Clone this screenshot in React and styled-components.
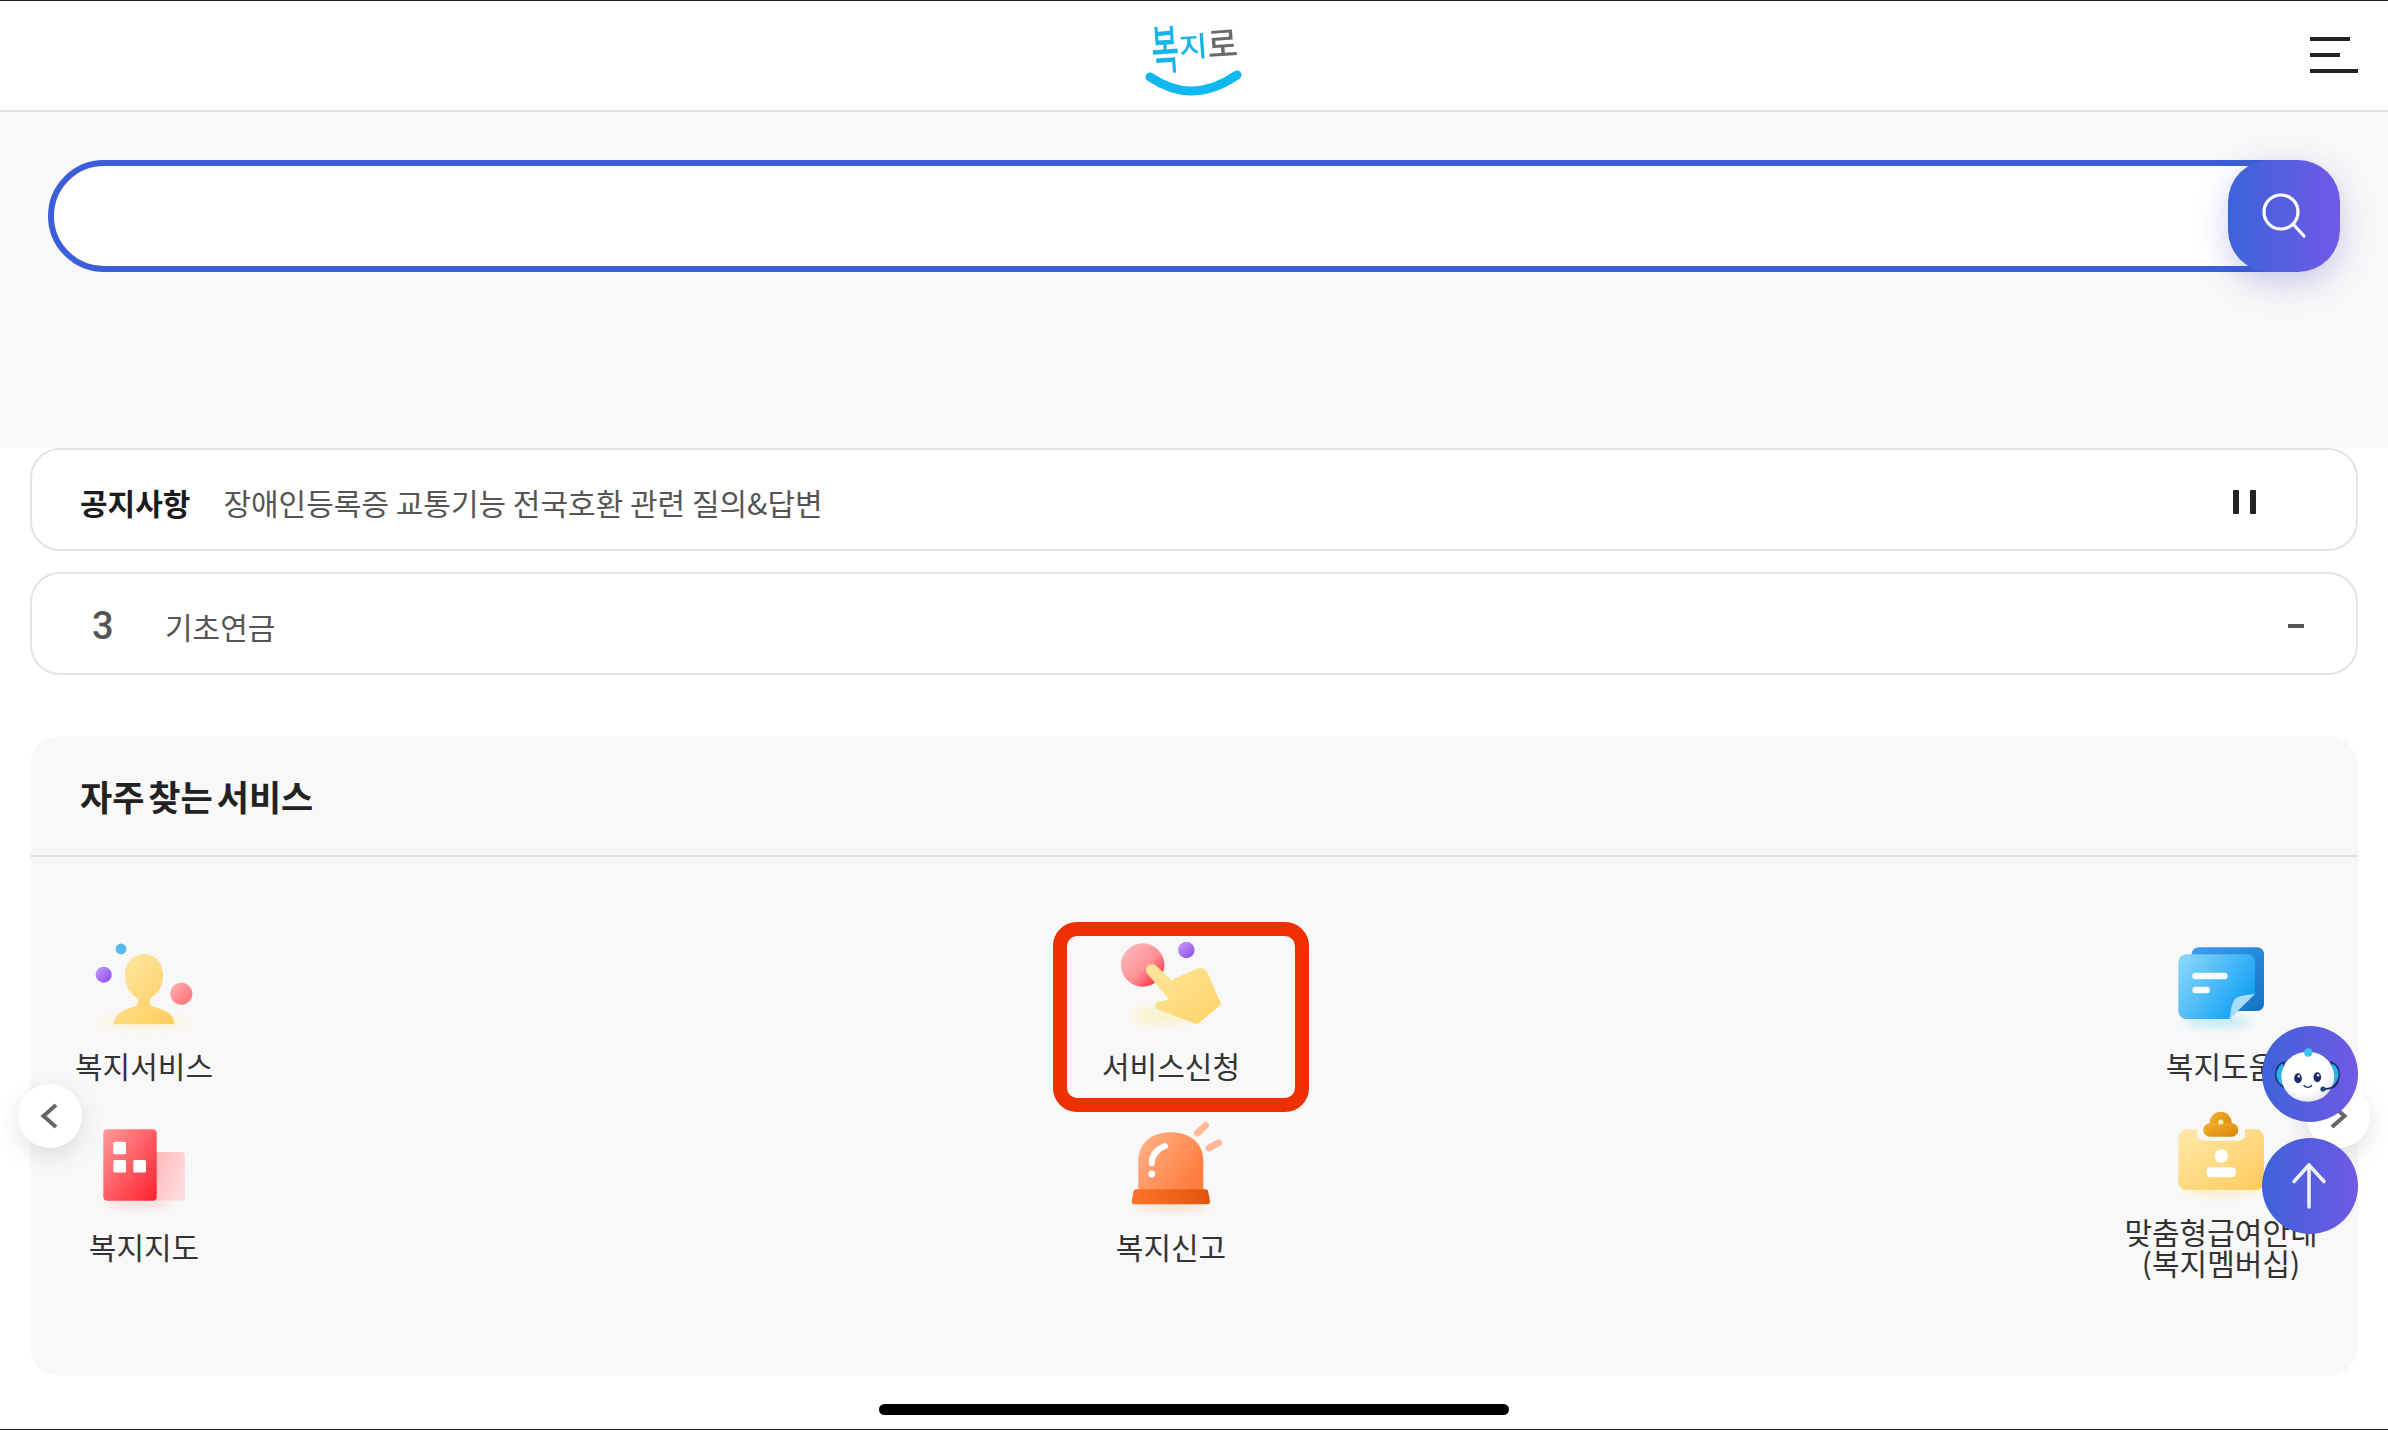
import React from "react";
import styled, { createGlobalStyle } from "styled-components";

const GlobalStyle = createGlobalStyle`
  html, body {
    margin: 0;
    padding: 0;
    background: #fff;
  }
  * {
    box-sizing: border-box;
  }
`;

const Page = styled.div`
  position: relative;
  display: flex;
  flex-direction: column;
  width: 2388px;
  height: 1430px;
  overflow: hidden;
  background: #fff;
  font-family: "Noto Sans CJK KR", "Noto Sans", sans-serif;
`;

const Header = styled.header`
  display: grid;
  grid-template-columns: 1fr auto 1fr;
  align-items: center;
  height: 112px;
  padding: 0 30px;
  border-top: 1px solid #1c1c1c;
  border-bottom: 2px solid #e0e0e0;
`;

const Logo = styled.div`
  grid-column: 2;
  display: flex;
  flex-direction: column;
  align-items: center;
  width: 98px;
  margin-top: -4px;
`;

const LogoText = styled.div`
  display: flex;
  align-items: center;
  height: 60px;
  padding-top: 4px;
  transform: rotate(-4deg);
`;

const LogoLetter = styled.span`
  display: inline-block;
  font-size: ${({ $size }) => $size}px;
  line-height: 1;
  font-weight: 500;
  color: ${({ $color }) => $color};
  transform: scaleY(${({ $stretch }) => $stretch});
`;

const LogoSmile = styled.svg`
  width: 98px;
  height: 26px;
  margin-top: -2px;
`;

const MenuButton = styled.div`
  grid-column: 3;
  justify-self: end;
  display: flex;
  flex-direction: column;
  gap: 12px;
  width: 48px;
  margin-top: -2px;
`;

const MenuLine = styled.span`
  display: block;
  width: ${({ $width }) => $width}px;
  height: 4px;
  background: #222;
`;

const SearchBand = styled.section`
  height: 336px;
  padding: 48px 48px 0 48px;
  background: #f8f8f8;
`;

const SearchBox = styled.div`
  position: relative;
  height: 112px;
  border: 6px solid #3a5fd8;
  border-radius: 56px;
  background: #fff;
`;

const SearchButton = styled.button`
  position: absolute;
  top: -6px;
  right: -6px;
  display: flex;
  align-items: center;
  justify-content: center;
  width: 112px;
  height: 112px;
  padding: 0;
  border: 0;
  border-radius: 42px;
  background: linear-gradient(90deg, #3b63d8, #7159e8);
  box-shadow: 0 10px 32px rgba(72, 72, 200, 0.28);
`;

const RowList = styled.div`
  display: flex;
  flex-direction: column;
  gap: 21px;
  padding: 0 30px;
`;

const Row = styled.div`
  display: flex;
  align-items: center;
  height: 103px;
  padding: 4px ${({ $right }) => $right}px 0 ${({ $left }) => $left}px;
  border: 2px solid #e3e3e3;
  border-radius: 30px;
  background: #fff;
`;

const NoticeLabel = styled.strong`
  margin-right: 33px;
  font-size: 30px;
  line-height: 40px;
  font-weight: 700;
  color: #1c1c1c;
`;

const RowText = styled.span`
  font-size: 30px;
  line-height: 40px;
  font-weight: 400;
  color: #555;
`;

const Rank = styled.span`
  width: 73px;
  font-family: Roboto, sans-serif;
  font-size: 38px;
  line-height: 40px;
  font-weight: 500;
  color: #555;
`;

const PauseIcon = styled.div`
  display: flex;
  gap: 11px;
  margin-left: auto;
`;

const PauseBar = styled.span`
  display: block;
  width: 6px;
  height: 24px;
  border-radius: 1px;
  background: #222;
`;

const MinusIcon = styled.span`
  display: block;
  width: 16px;
  height: 4px;
  margin-left: auto;
  background: #555;
`;

const ServiceCard = styled.section`
  position: relative;
  height: 640px;
  margin: 61px 30px 0;
  border-radius: 30px;
  background: #f8f8f8;
`;

const CardHeader = styled.div`
  display: flex;
  align-items: center;
  height: 121px;
  padding: 0 0 0 50px;
  border-bottom: 2px solid #e0e0e0;
`;

const CardTitle = styled.h2`
  margin: 0;
  font-size: 35px;
  line-height: 44px;
  font-weight: 700;
  word-spacing: -4px;
  color: #222;
`;

const ServiceGrid = styled.div`
  display: grid;
  grid-template-columns: 1027px 1050px 228px;
  grid-template-rows: 181px 181px;
  align-items: center;
  justify-items: start;
  margin-top: 61px;
  height: 362px;
  overflow: hidden;
`;

const ServiceItem = styled.div`
  position: relative;
  display: flex;
  flex-direction: column;
  align-items: center;
  width: 228px;
  margin-top: ${({ $tall }) => ($tall ? 4 : 0)}px;
`;

const ServiceIcon = styled.svg`
  display: block;
  width: 110px;
  height: 100px;
`;

const ServiceLabel = styled.span`
  margin-top: ${({ $tall }) => ($tall ? 10 : 14)}px;
  font-size: 30px;
  line-height: 31px;
  text-align: center;
  white-space: nowrap;
  color: #333;
`;

const Highlight = styled.div`
  position: absolute;
  top: -14px;
  left: -4px;
  right: -24px;
  bottom: -31px;
  border: 14px solid #ee2f00;
  border-radius: 24px;
`;

const ArrowButton = styled.div`
  position: absolute;
  top: 348px;
  ${({ $side }) => ($side === "left" ? "left: -12px;" : "right: -12px;")}
  display: flex;
  align-items: center;
  justify-content: center;
  width: 64px;
  height: 64px;
  border-radius: 50%;
  background: #fff;
  box-shadow: 0 8px 24px rgba(60, 60, 90, 0.14);
`;

const FloatButton = styled.div`
  position: absolute;
  right: 30px;
  top: ${({ $top }) => $top}px;
  width: 96px;
  height: 96px;
  border-radius: 50%;
  background: linear-gradient(90deg, #3d62d8, #7159e6);
`;

const FloatIcon = styled.svg`
  display: block;
  width: 96px;
  height: 96px;
`;

const HomeStrip = styled.div`
  flex: 1;
  display: flex;
  justify-content: center;
  padding-top: 28px;
  border-bottom: 1px solid #1c1c1c;
`;

const HomeBar = styled.span`
  display: block;
  width: 630px;
  height: 11px;
  border-radius: 6px;
  background: #000;
`;

const SearchGlyph = () => (
  <svg width="56" height="56" viewBox="0 0 56 56" fill="none" stroke="#fff" strokeWidth="3.2" strokeLinecap="round">
    <circle cx="25" cy="24" r="17" />
    <path d="M37 36 L48 48" />
  </svg>
);

const Chevron = ({ points }) => (
  <svg width="24" height="32" viewBox="0 0 24 32" fill="none" stroke="#666" strokeWidth="4" strokeLinejoin="miter">
    <polyline points={points} />
  </svg>
);

const Blur = ({ id, amount = 5 }) => (
  <filter id={id} x="-50%" y="-100%" width="200%" height="300%">
    <feGaussianBlur stdDeviation={amount} />
  </filter>
);

const PersonIcon = () => (
  <ServiceIcon viewBox="0 0 110 100">
    <defs>
      <linearGradient id="personFill" x1="0" y1="0" x2="1" y2="1">
        <stop offset="0" stopColor="#fde8a8" />
        <stop offset="1" stopColor="#ffcd58" />
      </linearGradient>
      <linearGradient id="personRed" x1="0" y1="0" x2="1" y2="1">
        <stop offset="0" stopColor="#ffb3b3" />
        <stop offset="1" stopColor="#ff6a6e" />
      </linearGradient>
      <linearGradient id="personPurple" x1="0" y1="0" x2="1" y2="1">
        <stop offset="0" stopColor="#c49bf5" />
        <stop offset="1" stopColor="#8a49ee" />
      </linearGradient>
      <Blur id="personGlow" amount={5} />
    </defs>
    <ellipse cx="55" cy="87" rx="42" ry="5" fill="#ffe89c" opacity="0.55" filter="url(#personGlow)" />
    <circle cx="32" cy="13" r="5.4" fill="#5cb9ec" />
    <circle cx="14.7" cy="38.7" r="8" fill="url(#personPurple)" />
    <circle cx="92.3" cy="57.7" r="11" fill="url(#personRed)" />
    <path
      d="M24.5 88 C25 79 33 74 44 71 C49 69.5 50.5 66 48 62 C41 58 36 50 36 39 C36 27 44 18 55 18 C66 18 74 27 74 39 C74 50 69 58 62 62 C59.5 66 61 69.5 66 71 C77 74 85 79 85.5 88 Z"
      fill="url(#personFill)"
    />
  </ServiceIcon>
);

const HandIcon = () => (
  <ServiceIcon viewBox="0 0 110 100">
    <defs>
      <linearGradient id="handRed" x1="0" y1="0" x2="1" y2="1">
        <stop offset="0" stopColor="#ffc0c0" />
        <stop offset="0.55" stopColor="#ff9196" />
        <stop offset="1" stopColor="#ff0f22" />
      </linearGradient>
      <linearGradient id="handFill" x1="0" y1="0" x2="1" y2="1">
        <stop offset="0" stopColor="#fde7a0" />
        <stop offset="1" stopColor="#ffd264" />
      </linearGradient>
      <linearGradient id="handPurple" x1="0" y1="0" x2="1" y2="1">
        <stop offset="0" stopColor="#c8a0f5" />
        <stop offset="1" stopColor="#8a4bee" />
      </linearGradient>
      <Blur id="handGlow" amount={6} />
    </defs>
    <ellipse cx="46" cy="80" rx="30" ry="7" fill="#ffec9e" opacity="0.6" filter="url(#handGlow)" />
    <circle cx="26.7" cy="29" r="21.7" fill="url(#handRed)" />
    <circle cx="70.3" cy="14" r="8.3" fill="url(#handPurple)" />
    <path
      d="M30.8 37 C28.5 33.5 31.5 27 37 28 C39 28.5 40 29.5 41.5 31 L56 44.5 C60 41.5 70 37.5 82 32.5 C86 31 90 33 91.5 36.5 L104.5 66.5 C105 68 104.6 69 103.5 70 L83 87 C81.8 88 80.6 88.2 79 87.6 L42 73.5 C38.5 72 38 67.5 41.5 66 L53 63.5 Z"
      fill="url(#handFill)"
    />
  </ServiceIcon>
);

const NoteIcon = () => (
  <ServiceIcon viewBox="0 0 110 100">
    <defs>
      <linearGradient id="noteBack" x1="0" y1="0" x2="1" y2="1">
        <stop offset="0" stopColor="#3d9df2" />
        <stop offset="1" stopColor="#1273c2" />
      </linearGradient>
      <linearGradient id="noteFront" x1="0" y1="0" x2="1" y2="0.6">
        <stop offset="0" stopColor="#90daf8" />
        <stop offset="1" stopColor="#12a0f6" />
      </linearGradient>
      <Blur id="noteGlow" amount={4} />
    </defs>
    <ellipse cx="52" cy="86" rx="34" ry="5" fill="#8adcf8" opacity="0.55" filter="url(#noteGlow)" />
    <rect x="25.7" y="11.3" width="72.3" height="63.7" rx="7" fill="url(#noteBack)" />
    <path
      d="M20.3 18.3 H81 C85.4 18.3 89 21.9 89 26.3 V58 L63.5 83 H20.3 C15.9 83 12.3 79.4 12.3 75 V26.3 C12.3 21.9 15.9 18.3 20.3 18.3 Z"
      fill="url(#noteFront)"
    />
    <path d="M89 58 C80 59 72 60 69 63 C65.5 67 65 75 63.5 83 Z" fill="#a8dcf6" />
    <rect x="26.3" y="36.7" width="35.4" height="6.6" rx="3.3" fill="#fff" opacity="0.95" />
    <rect x="26.3" y="50.7" width="17.7" height="6.6" rx="3.3" fill="#fff" opacity="0.95" />
  </ServiceIcon>
);

const BuildingIcon = () => (
  <ServiceIcon viewBox="0 0 110 100">
    <defs>
      <linearGradient id="buildingFront" x1="0" y1="0" x2="1" y2="1">
        <stop offset="0" stopColor="#ff9c9c" />
        <stop offset="1" stopColor="#ff1f2e" />
      </linearGradient>
      <linearGradient id="buildingBack" x1="0" y1="0" x2="1" y2="0.5">
        <stop offset="0" stopColor="#ffb4b6" />
        <stop offset="1" stopColor="#ffd8d9" />
      </linearGradient>
      <Blur id="buildingGlow" amount={4} />
    </defs>
    <ellipse cx="50" cy="86" rx="34" ry="4" fill="#ffb5b8" opacity="0.55" filter="url(#buildingGlow)" />
    <rect x="60" y="35" width="36" height="48.5" rx="4" fill="url(#buildingBack)" />
    <rect x="14.3" y="12.3" width="53.4" height="71.4" rx="4" fill="url(#buildingFront)" />
    <rect x="24.3" y="24.7" width="12.7" height="12.5" rx="1.5" fill="#fff" />
    <rect x="24.3" y="43" width="12.7" height="12.5" rx="1.5" fill="#fff" />
    <rect x="44.3" y="43" width="12.7" height="12.5" rx="1.5" fill="#fff" />
  </ServiceIcon>
);

const SirenIcon = () => (
  <ServiceIcon viewBox="0 0 110 100">
    <defs>
      <linearGradient id="sirenDome" x1="0" y1="0" x2="1" y2="0.6">
        <stop offset="0" stopColor="#ffb48c" />
        <stop offset="1" stopColor="#ff7d3e" />
      </linearGradient>
      <linearGradient id="sirenBase" x1="0" y1="0" x2="1" y2="0">
        <stop offset="0" stopColor="#ff7428" />
        <stop offset="1" stopColor="#e2540c" />
      </linearGradient>
      <Blur id="sirenGlow" amount={5} />
    </defs>
    <ellipse cx="55" cy="89" rx="36" ry="5" fill="#ffc2a4" opacity="0.5" filter="url(#sirenGlow)" />
    <path d="M22.3 74 V44 C22.3 26 36 15.3 54.8 15.3 C73.6 15.3 87.3 26 87.3 44 V74 Z" fill="url(#sirenDome)" />
    <path
      d="M20.5 72.3 H89.5 C91 72.3 91.8 73 92.2 74.2 L94 84 C94.3 86 93.2 87.3 91.5 87.3 H18 C16.3 87.3 15.3 86 15.7 84 L17.5 74.2 C17.9 73 19 72.3 20.5 72.3 Z"
      fill="url(#sirenBase)"
    />
    <path d="M49 29 C41 32 36 38 35.7 46.3" fill="none" stroke="#fff" strokeWidth="6" strokeLinecap="round" />
    <circle cx="35.7" cy="57" r="3.4" fill="#fff" />
    <path d="M81.5 16 L89.5 8.5 M93 31 L102.5 25.8" stroke="#ffb998" strokeWidth="7" strokeLinecap="round" />
  </ServiceIcon>
);

const ClipboardIcon = () => (
  <ServiceIcon viewBox="0 0 110 100">
    <defs>
      <linearGradient id="clipBoard" x1="0" y1="0" x2="1" y2="1">
        <stop offset="0" stopColor="#ffe9ac" />
        <stop offset="1" stopColor="#ffca5a" />
      </linearGradient>
      <linearGradient id="clipTop" x1="0" y1="0" x2="1" y2="1">
        <stop offset="0" stopColor="#f4b02f" />
        <stop offset="1" stopColor="#d78608" />
      </linearGradient>
      <Blur id="clipGlow" amount={4} />
    </defs>
    <ellipse cx="55" cy="86" rx="38" ry="4" fill="#ffe49a" opacity="0.6" filter="url(#clipGlow)" />
    <rect x="12.3" y="23.3" width="85.7" height="60.7" rx="8" fill="url(#clipBoard)" />
    <path d="M31.3 20 H79 V28 C79 32 76.5 34.7 72.5 34.7 H37.8 C33.8 34.7 31.3 32 31.3 28 Z" fill="#f8f8f8" />
    <circle cx="54.7" cy="16.7" r="11" fill="url(#clipTop)" />
    <rect x="37.3" y="17" width="35" height="13.7" rx="6.8" fill="url(#clipTop)" />
    <circle cx="54.7" cy="16" r="2.6" fill="#ffe9b8" />
    <circle cx="55.3" cy="50" r="6.8" fill="#fff" />
    <rect x="40.7" y="61.3" width="29" height="10" rx="4" fill="#fff" />
  </ServiceIcon>
);

const ChatbotGlyph = () => (
  <FloatIcon viewBox="0 0 96 96">
    <defs>
      <radialGradient id="botFace" cx="0.45" cy="0.4" r="0.7">
        <stop offset="0.6" stopColor="#ffffff" />
        <stop offset="1" stopColor="#d8dbe6" />
      </radialGradient>
    </defs>
    <path d="M22 36 C11 41 11 56 22 61 Z" fill="#29b2e6" stroke="#1d2a70" strokeWidth="1.4" />
    <path d="M69 36 C80 41 80 56 69 61 Z" fill="#29b2e6" stroke="#1d2a70" strokeWidth="1.4" />
    <ellipse cx="45.8" cy="50.7" rx="26.5" ry="25" fill="url(#botFace)" />
    <circle cx="46.3" cy="26.5" r="4.2" fill="#38c8f6" />
    <ellipse cx="36" cy="52.3" rx="3.8" ry="5" fill="#1e2a6a" />
    <ellipse cx="55.3" cy="51.3" rx="3.8" ry="5" fill="#1e2a6a" />
    <circle cx="36.8" cy="50.3" r="1.2" fill="#fff" />
    <circle cx="56.1" cy="49.3" r="1.2" fill="#fff" />
    <path d="M42 59.5 C44 62 47.5 62 49.5 59.5" fill="none" stroke="#1e2a6a" strokeWidth="1.4" strokeLinecap="round" />
    <path d="M76 54 C75 60 70 63 62 63" fill="none" stroke="#1d2a70" strokeWidth="1.6" />
    <circle cx="61" cy="63" r="2.6" fill="#1d4a70" />
  </FloatIcon>
);

const UpGlyph = () => (
  <FloatIcon viewBox="0 0 96 96" fill="none" stroke="#eef0ff" strokeWidth="3.6" strokeLinecap="round" strokeLinejoin="round">
    <path d="M47 69 V27 M32 43.5 L47 27 L62 43.5" />
  </FloatIcon>
);

const App = () => {
  return (
    <Page>
      <GlobalStyle />
      <Header>
        <Logo>
          <LogoText>
            <LogoLetter $size={30} $color="#18b4ea" $stretch={1.75}>복</LogoLetter>
            <LogoLetter $size={31} $color="#18b4ea" $stretch={0.9}>지</LogoLetter>
            <LogoLetter $size={33} $color="#6a6a6e" $stretch={1.05}>로</LogoLetter>
          </LogoText>
          <LogoSmile viewBox="0 0 98 26">
            <path d="M5 7 C20 17 32 21 46 21 C62 21 76 16 92 5" fill="none" stroke="#0fb8f0" strokeWidth="9" strokeLinecap="round" />
          </LogoSmile>
        </Logo>
        <MenuButton>
          <MenuLine $width={40} />
          <MenuLine $width={30} />
          <MenuLine $width={48} />
        </MenuButton>
      </Header>

      <SearchBand>
        <SearchBox>
          <SearchButton aria-label="검색">
            <SearchGlyph />
          </SearchButton>
        </SearchBox>
      </SearchBand>

      <RowList>
        <Row $left={48} $right={100}>
          <NoticeLabel>공지사항</NoticeLabel>
          <RowText>장애인등록증 교통기능 전국호환 관련 질의&amp;답변</RowText>
          <PauseIcon>
            <PauseBar />
            <PauseBar />
          </PauseIcon>
        </Row>
        <Row $left={60} $right={52}>
          <Rank>3</Rank>
          <RowText>기초연금</RowText>
          <MinusIcon />
        </Row>
      </RowList>

      <ServiceCard>
        <CardHeader>
          <CardTitle>자주 찾는 서비스</CardTitle>
        </CardHeader>
        <ServiceGrid>
          <ServiceItem>
            <PersonIcon />
            <ServiceLabel>복지서비스</ServiceLabel>
          </ServiceItem>
          <ServiceItem>
            <HandIcon />
            <ServiceLabel>서비스신청</ServiceLabel>
            <Highlight />
          </ServiceItem>
          <ServiceItem>
            <NoteIcon />
            <ServiceLabel>복지도움</ServiceLabel>
          </ServiceItem>
          <ServiceItem>
            <BuildingIcon />
            <ServiceLabel>복지지도</ServiceLabel>
          </ServiceItem>
          <ServiceItem>
            <SirenIcon />
            <ServiceLabel>복지신고</ServiceLabel>
          </ServiceItem>
          <ServiceItem $tall>
            <ClipboardIcon />
            <ServiceLabel $tall>
              맞춤형급여안내
              <br />
              (복지멤버십)
            </ServiceLabel>
          </ServiceItem>
        </ServiceGrid>
        <ArrowButton $side="left">
          <Chevron points="18,5 5.5,16 18,27" />
        </ArrowButton>
        <ArrowButton $side="right">
          <Chevron points="6,5 18.5,16 6,27" />
        </ArrowButton>
      </ServiceCard>

      <FloatButton $top={1026}>
        <ChatbotGlyph />
      </FloatButton>
      <FloatButton $top={1138}>
        <UpGlyph />
      </FloatButton>

      <HomeStrip>
        <HomeBar />
      </HomeStrip>
    </Page>
  );
};

export default App;
